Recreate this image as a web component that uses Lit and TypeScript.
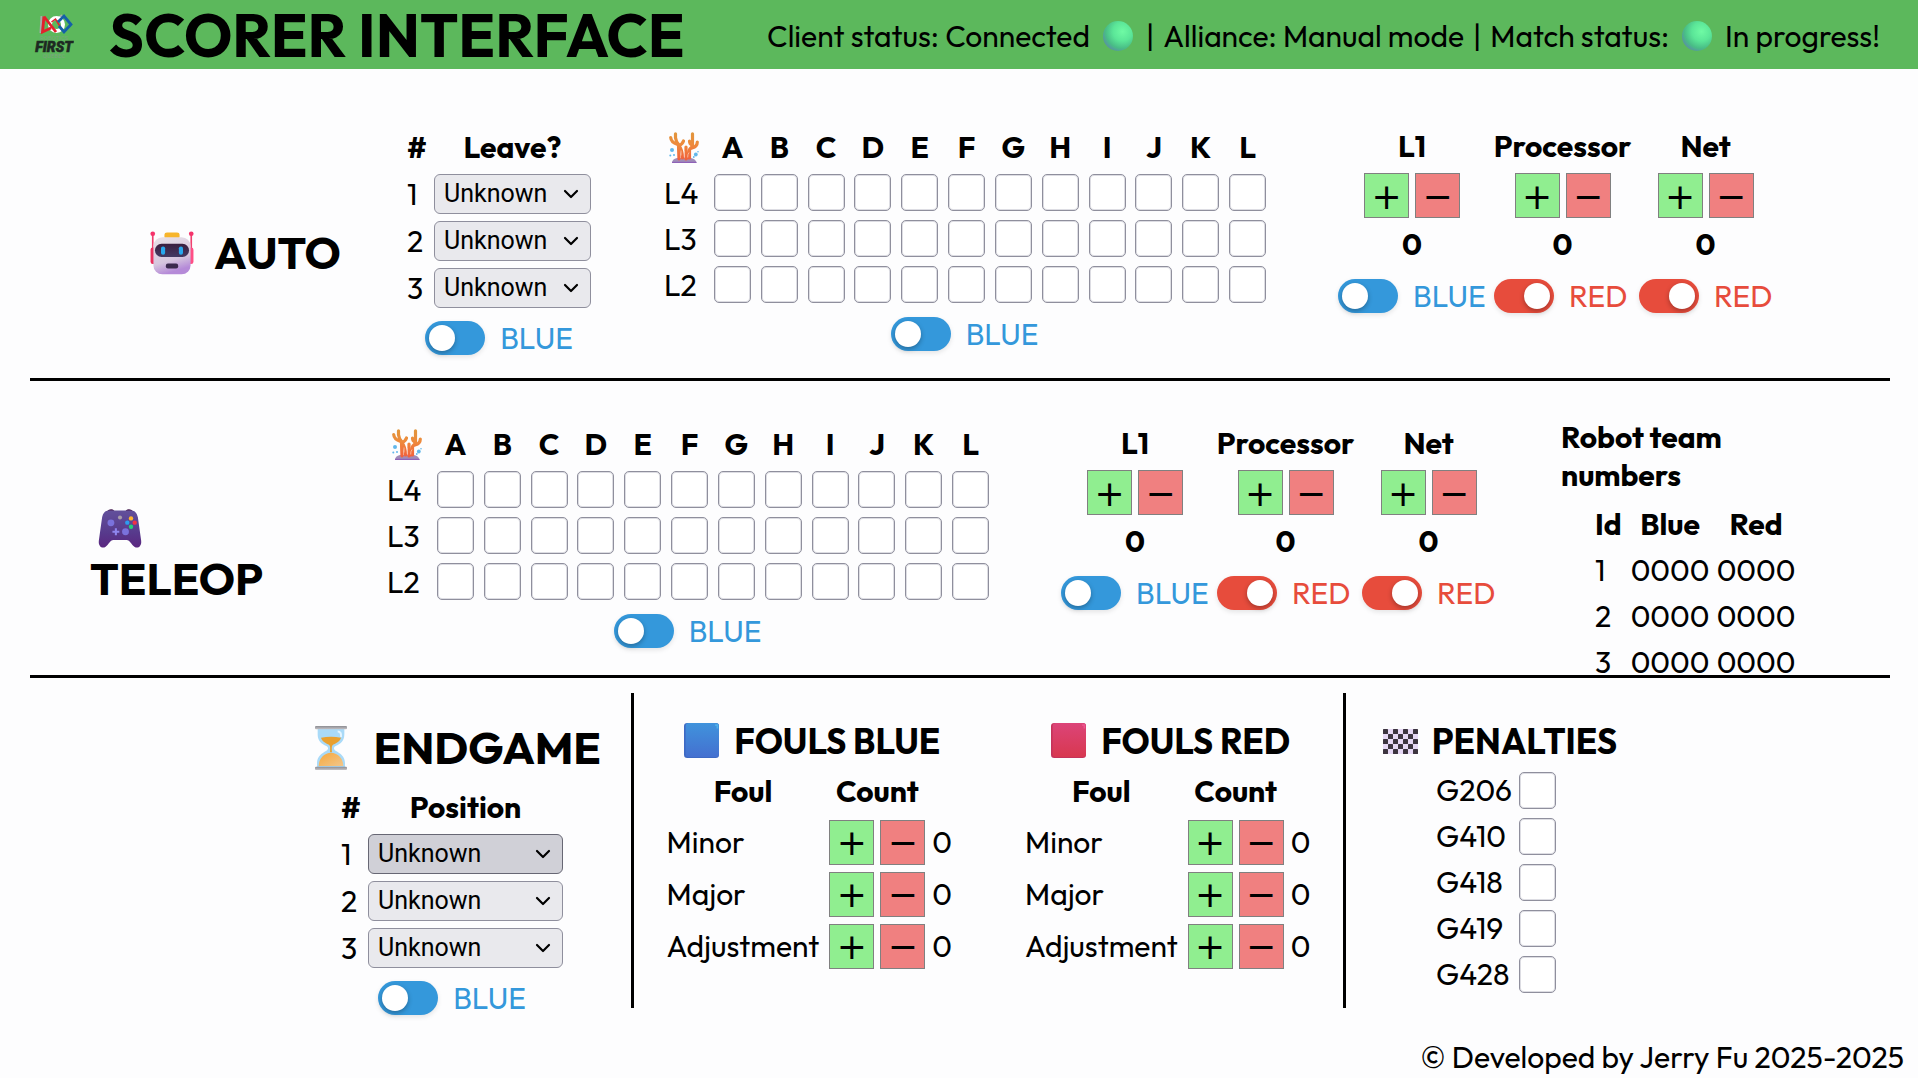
import { LitElement, html, css, svg } from "lit";
import { customElement, property } from "lit/decorators.js";

type Alliance = "blue" | "red";

const COLUMNS = ["A", "B", "C", "D", "E", "F", "G", "H", "I", "J", "K", "L"];
const LEVELS = ["L4", "L3", "L2"];
const ROBOTS = [1, 2, 3];
const FOULS = ["Minor", "Major", "Adjustment"];
const PENALTIES = ["G206", "G410", "G418", "G419", "G428"];

const robotIcon = html`<svg viewBox="0 0 32 32" aria-hidden="true">
  <defs>
    <linearGradient id="face" x1="0" y1="0" x2="0.300" y2="1">
      <stop offset="0" stop-color="#e9e2e8" /><stop offset="0.7" stop-color="#d6c6de" /><stop offset="1" stop-color="#b58ad8" />
    </linearGradient>
    <linearGradient id="visor" x1="0" y1="0" x2="0" y2="1">
      <stop offset="0" stop-color="#3b1f3f" /><stop offset="1" stop-color="#433a63" />
    </linearGradient>
  </defs>
  <path d="M2 2v13M30 2v13" stroke="#f0406f" stroke-width="1.2" />
  <circle cx="2" cy="2" r="1.7" fill="#f5336b" /><circle cx="30" cy="2" r="1.7" fill="#f5336b" />
  <rect x="0.4" y="12" width="4" height="12" rx="1.6" fill="#e8305f" />
  <rect x="27.6" y="12" width="4" height="12" rx="1.6" fill="#ff4f86" />
  <rect x="10.500" y="1" width="11" height="5" rx="1.8" fill="#f7b52c" />
  <rect x="2.500" y="4.500" width="27" height="27" rx="6.500" fill="url(#face)" />
  <rect x="3.600" y="9.300" width="24.800" height="9.600" rx="4.800" fill="url(#visor)" />
  <rect x="8" y="11.200" width="3" height="6" rx="1.400" fill="#28a8ee" />
  <rect x="21" y="11.200" width="3" height="6" rx="1.400" fill="#28a8ee" />
  <rect x="11.500" y="23.700" width="9" height="3.600" rx="1.500" fill="#3b2a4d" />
</svg>`;

const gamepadIcon = html`<svg viewBox="0 0 32 32" aria-hidden="true">
  <defs>
    <linearGradient id="pad" x1="0" y1="0" x2="0" y2="1">
      <stop offset="0" stop-color="#62509b" /><stop offset="0.6" stop-color="#573a8c" /><stop offset="1" stop-color="#5b2680" />
    </linearGradient>
  </defs>
  <path d="M6.500 3.500C7 1.400 11 1 12 3zM25.500 3.500C25 1.400 21 1 20 3z" fill="#4a1f52" />
  <path d="M8 2.500h16c3 0 4.400 2 5 5l2.400 17c.5 4-2.400 6-4.700 4.600-2.600-1.600-3.200-5.100-6-5.100h-9.400c-2.800 0-3.400 3.500-6 5.100C3 30.500.1 28.500.6 24.500L3 7.500c.6-3 2-5 5-5z" fill="url(#pad)" />
  <circle cx="9.400" cy="11.500" r="2.500" fill="#7a72dc" />
  <circle cx="20" cy="18" r="2.500" fill="#7a72dc" />
  <circle cx="16" cy="7.600" r="1.500" fill="#a79caa" />
  <path d="M13 15.500v5M10.500 18h5" stroke="#8f86ee" stroke-width="1.500" />
  <circle cx="24" cy="8.300" r="1.600" fill="#ffb52e" /><circle cx="21.300" cy="11.400" r="1.600" fill="#2e9cf0" />
  <circle cx="26.700" cy="11.400" r="1.600" fill="#f33045" /><circle cx="24" cy="14.400" r="1.600" fill="#22d07a" />
</svg>`;

const coralIcon = html`<svg viewBox="0 0 30 31" aria-hidden="true">
  <defs>
    <linearGradient id="reef" gradientUnits="userSpaceOnUse" x1="0" y1="0" x2="0" y2="28">
      <stop offset="0" stop-color="#e0963c" /><stop offset="0.450" stop-color="#ee8a3c" /><stop offset="1" stop-color="#f2603c" />
    </linearGradient>
  </defs>
  <path d="M3 31q0-4 5-5h14q5 1 5.500 5z" fill="#a08cb8" />
  <g fill="none" stroke="url(#reef)" stroke-width="3.200" stroke-linecap="round" stroke-linejoin="round">
    <path d="M6.500 1.800v4q.5 4 3 6.500 0 3 .5 14.500" />
    <path d="M1.700 5.500q.3 5 7 7M14.500 9q-1 3-4.500 4.500M9.500 13q4 5 4 13" />
    <path d="M23.500 1.800v7q.3 4-.5 6-4 3-4 11" />
    <path d="M28.300 10q0 4.500-5.300 6M20.500 9q0 3 2.500 4" />
    <path d="M17 15v12M20.500 18v8" />
  </g>
  <path d="M15.300 19v6M12 18.500v5M20 20.500q-1.500 2-1.300 5" stroke="#fbd3c0" stroke-width="0.700" fill="none" />
  <path d="M3 30.400h24.500" stroke="#8f62b8" stroke-width="1.200" />
  <g fill="#62b7ea">
    <circle cx="3" cy="18" r="2" /><circle cx="1.300" cy="23.500" r="1" /><circle cx="5" cy="23" r="1" />
    <circle cx="26.800" cy="22.500" r="1.900" /><circle cx="29" cy="19.800" r="0.800" /><circle cx="24.800" cy="25" r="0.900" />
  </g>
</svg>`;

const hourglassIcon = html`<svg viewBox="0 0 24 32" preserveAspectRatio="none" aria-hidden="true">
  <defs>
    <linearGradient id="cap" x1="0" y1="0" x2="0" y2="1">
      <stop offset="0" stop-color="#8c8c92" /><stop offset="1" stop-color="#c4c2c6" />
    </linearGradient>
    <linearGradient id="sand" x1="0" y1="0" x2="1" y2="1">
      <stop offset="0" stop-color="#f6a83c" /><stop offset="1" stop-color="#f2c68b" />
    </linearGradient>
  </defs>
  <path d="M2 2h20v4c0 5-3 7-6.500 8.500-1.700.8-1.700 2.700 0 3.500C19 20 22.500 22 22.500 27v3h-21v-3c0-5 3.500-7 7-9 1.700-.8 1.700-2.700 0-3.500C5 13 2 11 2 6z" fill="#a9daf8" />
  <path d="M4.500 8.500q7.500-1.500 15 0c-1 3-4 4-6 5.200-1 .8-1 2-.8 5.300h-1.400c.2-3.300.2-4.500-.8-5.300-2-1.200-5-2.200-6-5.200z" fill="#e8a030" />
  <path d="M2.800 29c0-5 4-9.500 9.200-9.500s9.200 4.500 9.200 9.500z" fill="url(#sand)" />
  <path d="M17 4q3 0 2.500 4" stroke="#e4f5ff" stroke-width="1.500" fill="none" />
  <rect x="0" y="0" width="24" height="2.400" rx="0.800" fill="url(#cap)" />
  <rect x="0" y="29.600" width="24" height="2.400" rx="0.800" fill="url(#cap)" />
</svg>`;

const flagIcon = html`<svg viewBox="0 0 35 25" aria-hidden="true">
  <rect width="35" height="25" rx="2" fill="#e6d8f5" />
  ${Array.from({ length: 35 }, (_, i) => i)
    .filter((i) => i % 2 === 0)
    .map((i) => svg`<rect x=${(i % 7) * 5} y=${Math.floor(i / 7) * 5} width="5" height="5" rx="0.6" fill="#3d3540" />`)}
</svg>`;

const squareIcon = (alliance: Alliance) => html`<svg viewBox="0 0 32 32" aria-hidden="true">
  <defs>
    <linearGradient id="tile" x1="0" y1="0" x2="0" y2="1">
      <stop offset="0" stop-color=${alliance === "blue" ? "#4093dc" : "#dc4478"} />
      <stop offset="1" stop-color=${alliance === "blue" ? "#4470d0" : "#d83850"} />
    </linearGradient>
  </defs>
  <rect width="32" height="32" rx="3" fill=${alliance === "blue" ? "#3d69c4" : "#c5335b"} />
  <rect x="1.500" y="0" width="30.500" height="31" rx="3" fill="url(#tile)" />
  <path d="M28.500 2h2v3" stroke=${alliance === "blue" ? "#4fb0ea" : "#ec5590"} stroke-width="1.500" fill="none" />
</svg>`;

const ballIcon = html`<svg class="ball" viewBox="0 0 30 30" aria-hidden="true">
  <defs>
    <radialGradient id="glow" cx="0.650" cy="0.350" r="0.700">
      <stop offset="0" stop-color="#6ffaa4" /><stop offset="0.450" stop-color="#5be698" />
      <stop offset="0.800" stop-color="#49bd86" /><stop offset="1" stop-color="#5795a0" />
    </radialGradient>
  </defs>
  <circle cx="15" cy="15" r="15" fill="url(#glow)" />
</svg>`;

const firstLogo = html`<svg class="logo" viewBox="0 0 40 46" role="img" aria-label="FIRST Robotics">
  <path d="M7.500 3l-1 17M28 2l-5 5" stroke="#a8aaac" stroke-width="2" />
  <circle cx="22.500" cy="11.500" r="6.500" fill="none" stroke="#fff" stroke-width="4" />
  <path d="M10 3.500L8.500 19l8.500-4M10 3.500L22 19" fill="none" stroke="#e3202c" stroke-width="2.800" />
  <path d="M17.500 9l4-3 5.500 9" fill="none" stroke="#e3202c" stroke-width="1.500" />
  <path d="M24 9L30 3l7 8.500-7 7.500-5-6" fill="none" stroke="#1560a8" stroke-width="2.800" />
  <text class="fine" x="20" y="27" text-anchor="middle">ROBOTICS</text>
  <text class="word" x="20" y="39" text-anchor="middle">FIRST</text>
  <text class="fine" x="20" y="45" text-anchor="middle">QUÉBEC</text>
</svg>`;

const base = css`
  * {
    box-sizing: border-box;
  }
  :host {
    font-family: Outfit, Lato, "Liberation Sans", sans-serif;
    font-size: 30px;
    line-height: 38px;
    color: #000;
  }
  h1,
  h2,
  h3,
  p {
    margin: 0;
  }
  table {
    border-collapse: collapse;
  }
  th,
  td {
    padding: 0;
  }
`;

@customElement("alliance-switch")
export class AllianceSwitch extends LitElement {
  @property() alliance: Alliance = "blue";

  static styles = [
    base,
    css`
      :host {
        display: block;
      }
      .switch {
        display: flex;
        align-items: center;
        gap: 15px;
        height: 34px;
        color: #3498db;
      }
      .red {
        color: #e74c3c;
      }
      .track {
        appearance: none;
        margin: 0;
        width: 60px;
        height: 34px;
        padding: 4px;
        border-radius: 17px;
        background: currentColor;
        color: inherit;
        box-shadow: 0 2px 5px rgba(0, 0, 0, 0.1);
        display: flex;
        cursor: pointer;
      }
      .track::before {
        content: "";
        width: 26px;
        height: 26px;
        border-radius: 50%;
        background: #fff;
        box-shadow: 0 2px 5px rgba(0, 0, 0, 0.3);
      }
      .track:checked {
        justify-content: flex-end;
      }
      .name {
        min-width: 70px;
      }
      .red .name {
        min-width: 56px;
      }
    `,
  ];

  private toggle(event: Event) {
    this.alliance = (event.target as HTMLInputElement).checked ? "red" : "blue";
  }

  render() {
    return html`<label class="switch ${this.alliance}">
      <input class="track" type="checkbox" .checked=${this.alliance === "red"} @change=${this.toggle} />
      <span class="name">${this.alliance.toUpperCase()}</span>
    </label>`;
  }
}

@customElement("step-buttons")
export class StepButtons extends LitElement {
  static styles = [
    base,
    css`
      :host {
        display: inline-flex;
        gap: 6px;
      }
      .step {
        width: 45px;
        height: 45px;
        padding: 2px 0 0;
        border: 1px solid #808080;
        font: 36px/40px "DejaVu Sans", sans-serif;
        color: #000;
        background: #90ee90;
      }
      .minus {
        background: #f08080;
      }
    `,
  ];

  private step(delta: number) {
    this.dispatchEvent(new CustomEvent("step", { detail: delta }));
  }

  render() {
    return html`<button class="step" type="button" aria-label="Add" @click=${() => this.step(1)}>+</button>
      <button class="step minus" type="button" aria-label="Subtract" @click=${() => this.step(-1)}>−</button>`;
  }
}

@customElement("score-counters")
export class ScoreCounters extends LitElement {
  @property({ attribute: false }) counts = [0, 0, 0];

  static styles = [
    base,
    css`
      .counters {
        display: grid;
        grid-template-columns: 148px 137px 133px;
        column-gap: 8px;
      }
      .counter {
        display: flex;
        flex-direction: column;
        align-items: center;
        white-space: nowrap;
      }
      .name {
        font-size: 30px;
        line-height: 47px;
        margin-bottom: 3px;
      }
      .count {
        font-weight: 700;
        line-height: 46px;
        margin: 3px 0 12px;
      }
      alliance-switch {
        align-self: flex-start;
      }
    `,
  ];

  private change(index: number, delta: number) {
    this.counts = this.counts.map((n, i) => (i === index ? Math.max(0, n + delta) : n));
  }

  render() {
    const names = ["L1", "Processor", "Net"];
    const sides: Alliance[] = ["blue", "red", "red"];
    return html`<div class="counters">
      ${names.map(
        (name, i) => html`<div class="counter">
          <h3 class="name">${name}</h3>
          <step-buttons @step=${(e: CustomEvent) => this.change(i, e.detail)}></step-buttons>
          <output class="count">${this.counts[i]}</output>
          <alliance-switch alliance=${sides[i]}></alliance-switch>
        </div>`
      )}
    </div>`;
  }
}

const box = css`
  .box {
    appearance: none;
    display: block;
    margin: 0 auto 2px;
    width: 37px;
    height: 37px;
    border: 1px solid #8f8f9d;
    border-radius: 5px;
    background: #fff;
    box-shadow: inset 0 0 0 1px #dddde3;
  }
  .box:checked {
    background: #0060df;
  }
`;

@customElement("coral-grid")
export class CoralGrid extends LitElement {
  static styles = [
    base,
    box,
    css`
      .wrap {
        width: 607px;
        display: flex;
        flex-direction: column;
        align-items: center;
        gap: 9px;
      }
      .grid {
        width: 100%;
        table-layout: fixed;
      }
      .corner {
        width: 45px;
        text-align: left;
      }
      .corner svg {
        display: block;
        width: 30px;
        height: 31px;
        margin: 2px 0 0 5px;
      }
      .head {
        height: 47px;
      }
      .row {
        height: 46px;
      }
      .level {
        font-weight: 400;
        text-align: left;
      }
      alliance-switch {
        margin-right: 6px;
      }
    `,
  ];

  render() {
    return html`<div class="wrap">
      <table class="grid">
        <tr class="head">
          <th class="corner">${coralIcon}</th>
          ${COLUMNS.map((c) => html`<th scope="col">${c}</th>`)}
        </tr>
        ${LEVELS.map(
          (level) => html`<tr class="row">
            <th class="level" scope="row">${level}</th>
            ${COLUMNS.map((c) => html`<td><input class="box" type="checkbox" aria-label="${level} ${c}" /></td>`)}
          </tr>`
        )}
      </table>
      <alliance-switch></alliance-switch>
    </div>`;
  }
}

@customElement("robot-picker")
export class RobotPicker extends LitElement {
  @property() heading = "";
  @property({ attribute: false }) options: string[] = [];
  @property({ type: Boolean }) wide = false;
  @property({ type: Number }) active = 0;

  static styles = [
    base,
    css`
      .wrap {
        display: inline-flex;
        flex-direction: column;
        align-items: center;
        gap: 10px;
      }
      .row {
        height: 47px;
      }
      .num {
        width: 27px;
        font-weight: 400;
        text-align: left;
      }
      .hash {
        text-align: left;
      }
      .field {
        position: relative;
        display: block;
        width: 157px;
      }
      .wide .field {
        width: 195px;
      }
      .select {
        appearance: none;
        display: block;
        width: 100%;
        height: 40px;
        padding: 0 9px;
        border: 1px solid #8f8f9d;
        border-radius: 6px;
        background: #e9e9ed;
        color: #000;
        font: 25px/38px Roboto, "Noto Sans", sans-serif;
      }
      .active {
        background: #d0d0d7;
        border-color: #676774;
      }
      .chevron {
        position: absolute;
        right: 12px;
        top: 15px;
        width: 16px;
        height: 11px;
        pointer-events: none;
      }
    `,
  ];

  render() {
    return html`<div class="wrap ${this.wide ? "wide" : ""}">
      <table>
        <tr class="row">
          <th class="hash" scope="col">#</th>
          <th scope="col">${this.heading}</th>
        </tr>
        ${ROBOTS.map(
          (n) => html`<tr class="row">
            <th class="num" scope="row">${n}</th>
            <td>
              <span class="field">
                <select class="select ${this.active === n ? "active" : ""}" aria-label="${this.heading} ${n}">
                  ${this.options.map((o) => html`<option>${o}</option>`)}
                </select>
                <svg class="chevron" viewBox="0 0 16 11" aria-hidden="true">
                  <path d="M2 2l6 6 6-6" fill="none" stroke="#000" stroke-width="2.200" stroke-linecap="round" stroke-linejoin="round" />
                </svg>
              </span>
            </td>
          </tr>`
        )}
      </table>
      <alliance-switch></alliance-switch>
    </div>`;
  }
}

@customElement("foul-panel")
export class FoulPanel extends LitElement {
  @property() alliance: Alliance = "blue";
  @property({ attribute: false }) counts = [0, 0, 0];

  static styles = [
    base,
    css`
      .panel {
        display: flex;
        flex-direction: column;
        align-items: center;
      }
      .title {
        display: flex;
        align-items: center;
        gap: 15px;
        height: 49px;
        padding-left: 6px;
        font-size: 35px;
        white-space: nowrap;
      }
      .title svg {
        width: 35px;
        height: 35px;
      }
      .head {
        height: 51px;
      }
      .row {
        height: 52px;
      }
      .foul {
        padding-right: 6px;
      }
      .row .foul {
        font-weight: 400;
        text-align: left;
      }
      .buttons {
        width: 104px;
        text-align: center;
      }
      .buttons step-buttons {
        vertical-align: middle;
      }
      .count {
        padding-left: 3px;
      }
    `,
  ];

  private change(index: number, delta: number) {
    this.counts = this.counts.map((n, i) => (i === index ? Math.max(0, n + delta) : n));
  }

  render() {
    return html`<section class="panel">
      <h2 class="title">${squareIcon(this.alliance)} FOULS ${this.alliance.toUpperCase()}</h2>
      <table>
        <tr class="head">
          <th class="foul" scope="col">Foul</th>
          <th scope="col">Count</th>
          <td></td>
        </tr>
        ${FOULS.map(
          (foul, i) => html`<tr class="row">
            <th class="foul" scope="row">${foul}</th>
            <td class="buttons">
              <step-buttons @step=${(e: CustomEvent) => this.change(i, e.detail)}></step-buttons>
            </td>
            <td class="count">${this.counts[i]}</td>
          </tr>`
        )}
      </table>
    </section>`;
  }
}

@customElement("app-root")
export class AppRoot extends LitElement {
  static styles = [
    base,
    box,
    css`
      :host {
        display: flex;
        flex-direction: column;
        min-height: 100vh;
        background: #fdfdfe;
      }
      .header {
        display: flex;
        align-items: center;
        height: 69px;
        padding: 2px 38px 0 34px;
        background: #5cb85c;
        white-space: nowrap;
      }
      .logo {
        width: 40px;
        height: 46px;
      }
      .word {
        font: italic 900 14px Roboto, sans-serif;
        fill: #1d2a22;
        stroke: #1d2a22;
        stroke-width: 0.6;
      }
      .fine {
        font: 6px Roboto, sans-serif;
        fill: #7da57f;
      }
      .brand {
        margin-left: 35px;
        font-size: 60px;
        line-height: 67px;
      }
      .status {
        display: flex;
        align-items: center;
        gap: 9px;
        margin-left: auto;
      }
      .item {
        display: flex;
        align-items: center;
        gap: 13px;
      }
      .client {
        padding-right: 4px;
      }
      .ball {
        width: 30px;
        height: 30px;
      }
      .period {
        display: grid;
        margin: 0 28px 0 30px;
        border-bottom: 3px solid #000;
      }
      .auto {
        grid-template-columns: 377fr 257fr 674fr 552fr;
        height: 312px;
        padding-top: 54px;
      }
      .teleop {
        grid-template-columns: 357fr 674fr 500fr 329fr;
        height: 297px;
        padding-top: 39px;
      }
      .title {
        display: flex;
        align-items: center;
        font-size: 45px;
        line-height: 51px;
      }
      .title svg {
        width: 44px;
        height: 44px;
      }
      .auto .title {
        gap: 20px;
        padding: 4px 0 0 120px;
      }
      .teleop .title {
        flex-direction: column;
        align-items: flex-start;
        justify-content: center;
        gap: 2px;
        padding: 5px 0 0 60px;
      }
      .teleop .title svg {
        margin-left: 8px;
      }
      .teams {
        width: 238px;
        margin-top: -2px;
      }
      .teamtitle {
        font-size: 30px;
        line-height: 38px;
        width: 180px;
        margin-bottom: 7px;
      }
      .teamtable {
        margin-left: auto;
      }
      .teamtable tr {
        height: 46px;
      }
      .teamtable th {
        font-weight: 700;
      }
      .teamtable .id {
        width: 32px;
        text-align: left;
      }
      .teamtable .rowid {
        font-weight: 400;
        text-align: left;
      }
      .team {
        width: 86px;
        text-align: center;
      }
      .bottom {
        display: grid;
        grid-template-columns: 604fr 712fr 544fr;
        grid-template-rows: 315px;
        margin: 15px 28px 0 30px;
      }
      .endgame {
        display: flex;
        flex-direction: column;
        align-items: flex-end;
        padding: 20px 30px 0 0;
        border-right: 3px solid #000;
      }
      .endgame .title {
        gap: 26px;
        line-height: 70px;
      }
      .endgame .title svg {
        width: 32px;
        height: 44px;
      }
      .endgame robot-picker {
        margin-right: 38px;
      }
      .fouls {
        display: flex;
        justify-content: center;
        gap: 73px;
        padding-top: 23px;
        border-right: 3px solid #000;
      }
      .penalties {
        display: flex;
        flex-direction: column;
        align-items: center;
        width: 234px;
        margin-left: 37px;
        padding-top: 22px;
      }
      .subtitle {
        display: flex;
        align-items: center;
        gap: 14px;
        height: 52px;
        font-size: 35px;
      }
      .subtitle svg {
        width: 35px;
        height: 25px;
      }
      .penalty {
        display: flex;
        align-items: center;
        justify-content: space-between;
        width: 120px;
        height: 46px;
        margin-right: 8px;
      }
      .penalty .box {
        margin: 0;
      }
      .footer {
        margin-top: auto;
        padding: 0 14px 0 0;
        line-height: 42px;
        text-align: right;
      }
    `,
  ];

  render() {
    return html`
      <header class="header">
        ${firstLogo}
        <h1 class="brand">SCORER INTERFACE</h1>
        <div class="status">
          <span class="item client">Client status: Connected ${ballIcon}</span>
          <span>|</span>
          <span>Alliance: Manual mode</span>
          <span>|</span>
          <span class="item">Match status: ${ballIcon} In progress!</span>
        </div>
      </header>
      <section class="period auto">
        <h2 class="title">${robotIcon} AUTO</h2>
        <robot-picker heading="Leave?" .options=${["Unknown", "Yes", "No"]}></robot-picker>
        <coral-grid></coral-grid>
        <score-counters></score-counters>
      </section>
      <section class="period teleop">
        <h2 class="title">${gamepadIcon} TELEOP</h2>
        <coral-grid></coral-grid>
        <score-counters></score-counters>
        <div class="teams">
          <h3 class="teamtitle">Robot team numbers</h3>
          <table class="teamtable">
            <tr>
              <th class="id" scope="col">Id</th>
              <th scope="col">Blue</th>
              <th scope="col">Red</th>
            </tr>
            ${ROBOTS.map(
              (n) => html`<tr>
                <th class="rowid" scope="row">${n}</th>
                <td class="team">0000</td>
                <td class="team">0000</td>
              </tr>`
            )}
          </table>
        </div>
      </section>
      <div class="bottom">
        <section class="endgame">
          <h2 class="title">${hourglassIcon} ENDGAME</h2>
          <robot-picker
            wide
            heading="Position"
            active="1"
            .options=${["Unknown", "None", "Park", "Shallow", "Deep"]}
          ></robot-picker>
        </section>
        <div class="fouls">
          <foul-panel alliance="blue"></foul-panel>
          <foul-panel alliance="red"></foul-panel>
        </div>
        <section class="penalties">
          <h2 class="subtitle">${flagIcon} PENALTIES</h2>
          ${PENALTIES.map(
            (p) => html`<label class="penalty">${p}<input class="box" type="checkbox" /></label>`
          )}
        </section>
      </div>
      <footer class="footer">© Developed by Jerry Fu 2025-2025</footer>
    `;
  }
}
